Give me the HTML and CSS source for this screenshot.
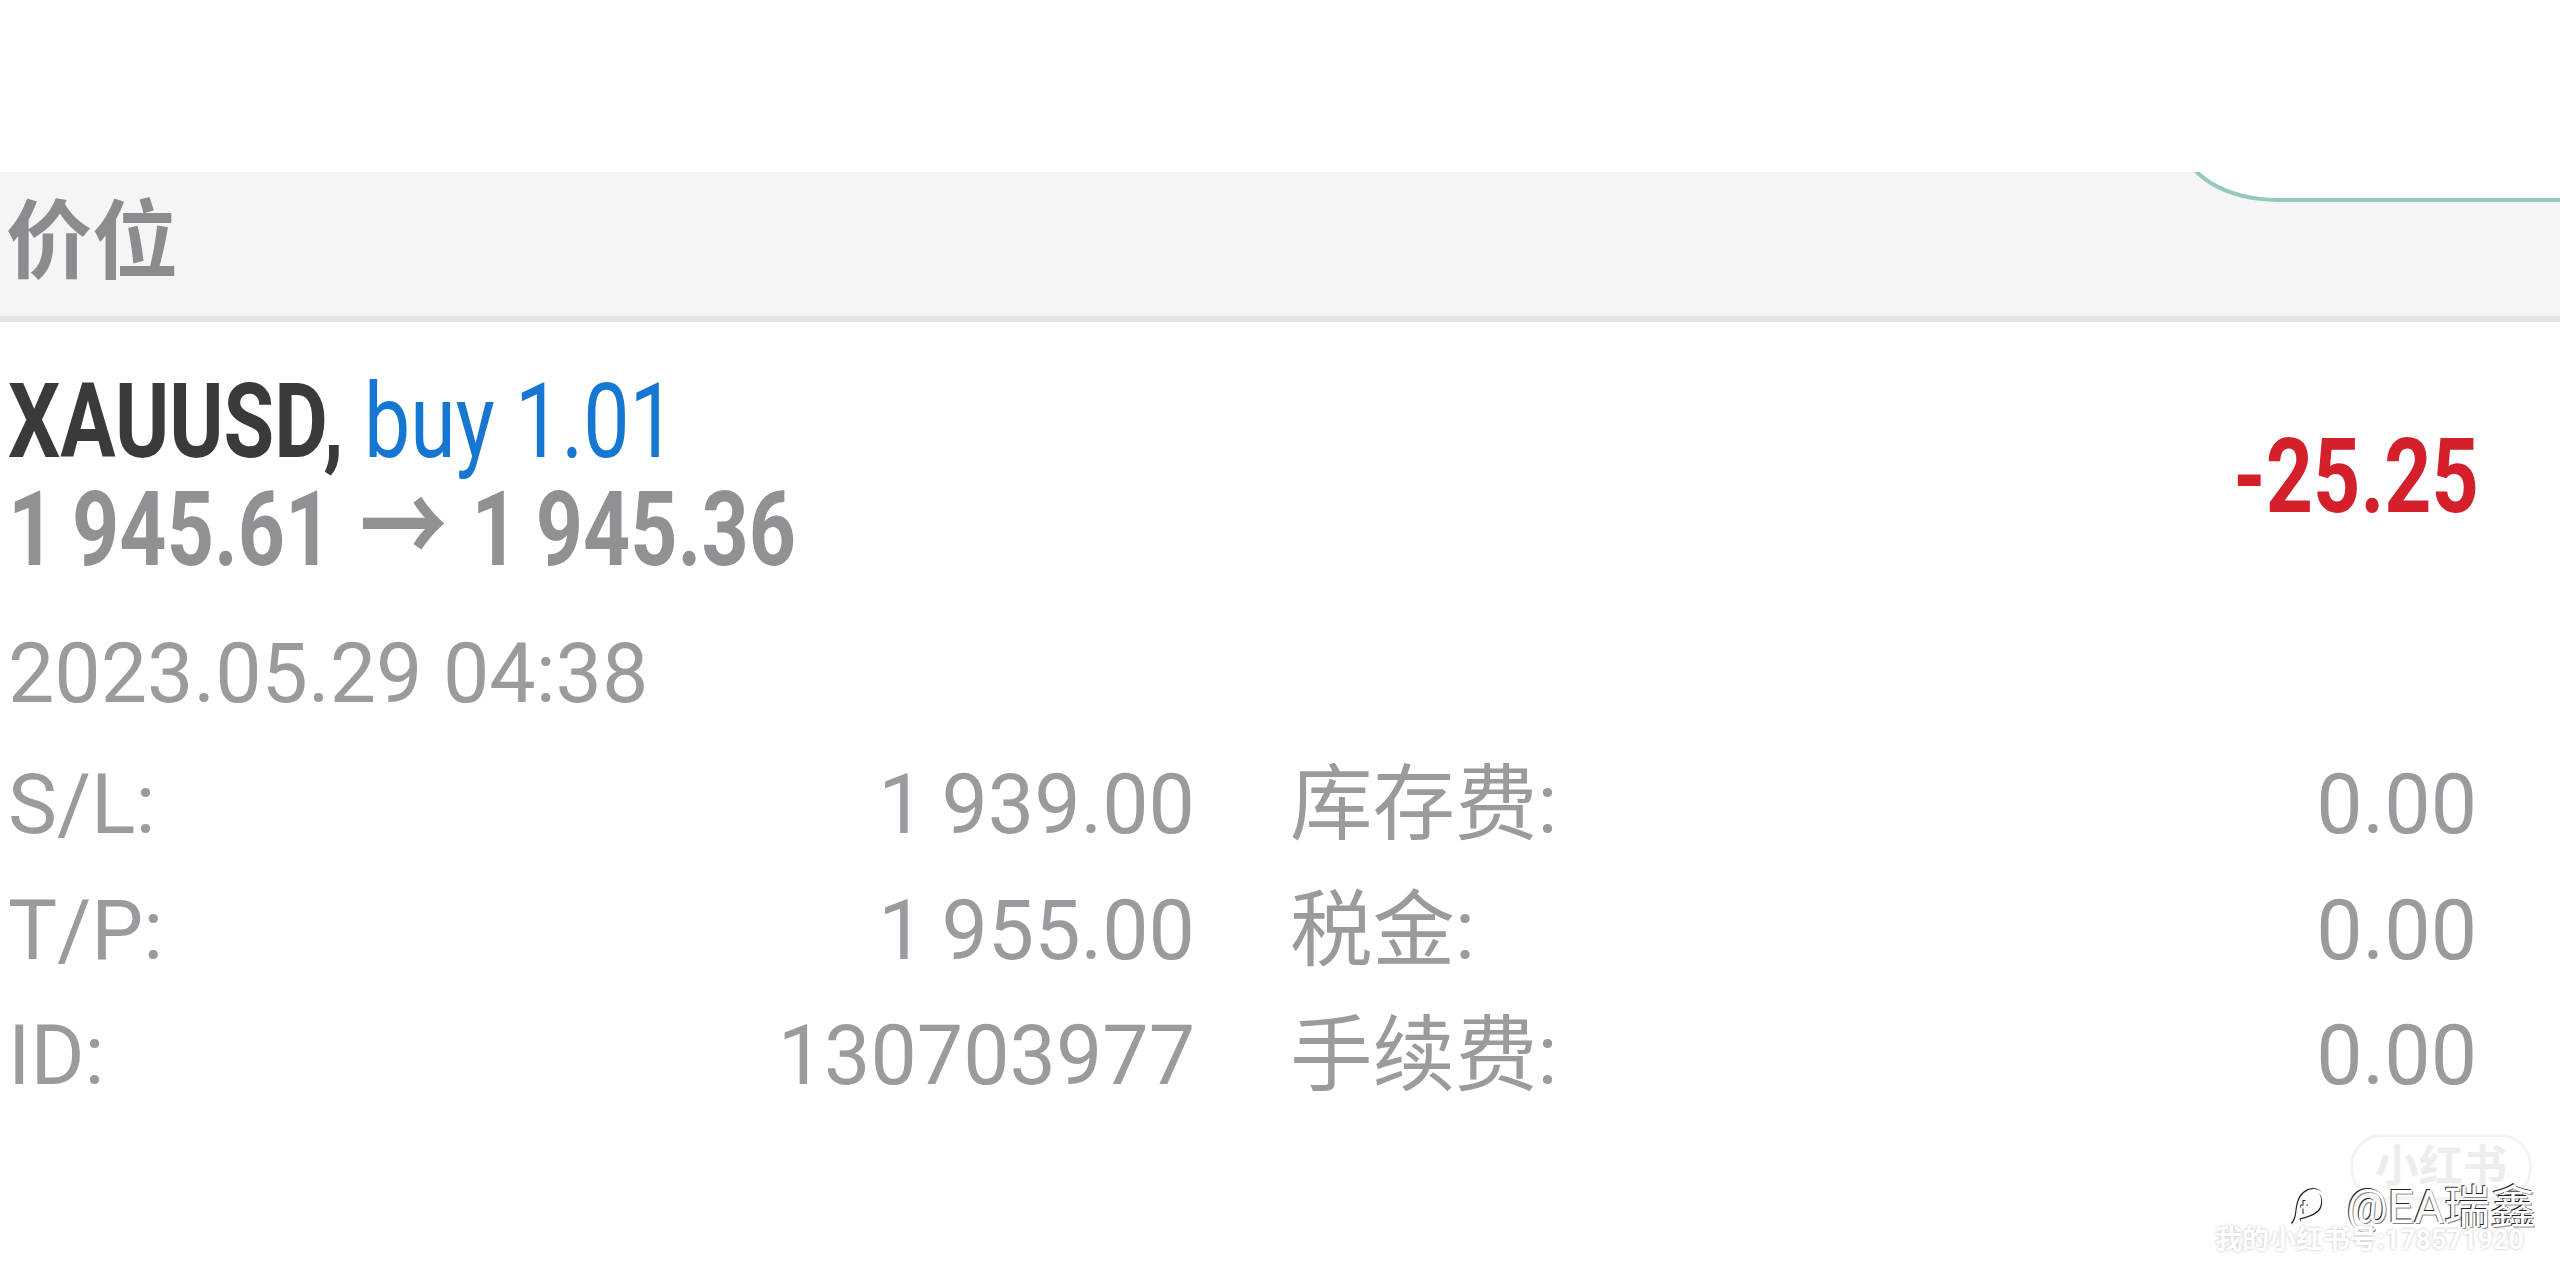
FILE: index.html
```html
<!DOCTYPE html>
<html lang="zh-CN">
<head>
  <meta charset="UTF-8">
  <meta name="viewport" content="width=device-width, initial-scale=1.0">
  <title>价位</title>
  <link rel="stylesheet" href="styles.css">
</head>
<body>

  <div class="top"></div>

  <div class="section-head">
    <span class="section-title">价位</span>
    <div class="tab-edge"></div>
  </div>

  <div class="position">
    <div class="pos-main">
      <div class="pos-left">
        <div class="line"><span class="narrow"><b class="symbol">XAUUSD,</b> <span class="side">buy 1.01</span></span></div>
        <div class="line"><span class="narrow prices">1&#8201;945.61<span class="arrow">&rarr;</span>1&#8201;945.36</span></div>
      </div>
      <div class="profit"><span class="narrow right">-25.25</span></div>
    </div>

    <div class="date">2023.05.29 04:38</div>

    <div class="details">
      <div class="pair"><span>S/L:</span><span>1&#8201;939.00</span></div>
      <div class="pair"><span>库存费:</span><span>0.00</span></div>
      <div class="pair"><span>T/P:</span><span>1&#8201;955.00</span></div>
      <div class="pair"><span>税金:</span><span>0.00</span></div>
      <div class="pair"><span>ID:</span><span>130703977</span></div>
      <div class="pair"><span>手续费:</span><span>0.00</span></div>
    </div>
  </div>

  <div class="watermark">
    <div class="wm-logo">小红书</div>
    <div class="wm-name">
      <svg width="40" height="44" viewBox="0 0 40 44">
        <path d="M6 40 C12 34 10 26 12 20 C14 10 22 4 30 6 C38 8 38 20 34 26 C30 32 20 34 14 36" fill="none" stroke="#fff" stroke-width="3"/>
        <path d="M14 22 H22 M18 16 V30" fill="none" stroke="#fff" stroke-width="3"/>
      </svg>
      <span>@EA瑞鑫</span>
    </div>
    <div class="wm-id">我的小红书号:178571920</div>
  </div>

</body>
</html>
```

FILE: styles.css
```css
body {
  margin: 0;
  background-color: #fff;
  font-family: Roboto, "Noto Sans CJK SC", sans-serif;
  position: relative;
  height: 1280px;
  overflow: hidden;
}

.top {
  height: 172px;
}

.section-head {
  position: relative;
  overflow: hidden;
  height: 150px;
  box-sizing: border-box;
  padding: 0 0 20px 6px;
  background-color: #f5f5f5;
  border-bottom: 6px solid #e4e4e4;
  display: flex;
  align-items: center;
}

.section-title {
  font-size: 86px;
  font-weight: bold;
  color: #8c8c90;
}

.tab-edge {
  position: absolute;
  top: -36px;
  left: 2181px;
  right: -10px;
  height: 62px;
  background-color: #fff;
  border-left: 4px solid #93c8bf;
  border-bottom: 4px solid #93c8bf;
  border-bottom-left-radius: 97px 60px;
}

.position {
  padding: 47px 81px 0 8px;
}

.pos-main {
  display: flex;
  justify-content: space-between;
  align-items: center;
}

.pos-left .line {
  font-size: 103px;
  line-height: 106px;
  white-space: nowrap;
}

.narrow {
  display: inline-block;
  transform: scaleX(0.8);
  transform-origin: left center;
}

.narrow.right {
  transform-origin: right center;
}

.symbol {
  color: #3a3a3a;
}

.side {
  color: #1677d3;
}

.prices {
  font-weight: bold;
  color: #919195;
}

.arrow {
  display: inline-block;
  font-size: 110px;
  margin: 0 30px 0 34px;
}

.profit {
  font-size: 103px;
  font-weight: bold;
  color: #d3202a;
}

.date {
  margin-top: 41px;
  font-size: 82.5px;
  line-height: 100px;
  color: #9b9b9f;
}

.details {
  margin-top: 18px;
  display: grid;
  grid-template-columns: 1187px 1187px;
  column-gap: 95px;
  font-size: 82.5px;
  line-height: 125.5px;
  color: #9b9b9f;
}

.pair {
  display: flex;
  justify-content: space-between;
}

.watermark {
  position: absolute;
  right: 24px;
  bottom: 24px;
  display: flex;
  flex-direction: column;
  align-items: flex-end;
}

.wm-logo {
  margin-right: 4px;
  margin-bottom: -18px;
  padding: 2px 22px;
  border: 3px solid #f3f3f3;
  border-radius: 32px;
  font-size: 44px;
  line-height: 56px;
  font-weight: bold;
  color: #ededed;
}

.wm-name {
  margin-bottom: -8px;
  display: flex;
  align-items: center;
  gap: 20px;
  font-size: 46px;
  line-height: 50px;
  color: #fff;
  text-shadow: -1px -1px 0 #222, 1px 1px 0 #888;
}

.wm-name svg {
  filter: drop-shadow(-1px -1px 0 #222);
}

.wm-id {
  font-size: 27px;
  font-weight: bold;
  line-height: 32px;
  color: #fff;
  text-shadow: 0 0 3px #bbb;
  margin-right: 12px;
}
```
